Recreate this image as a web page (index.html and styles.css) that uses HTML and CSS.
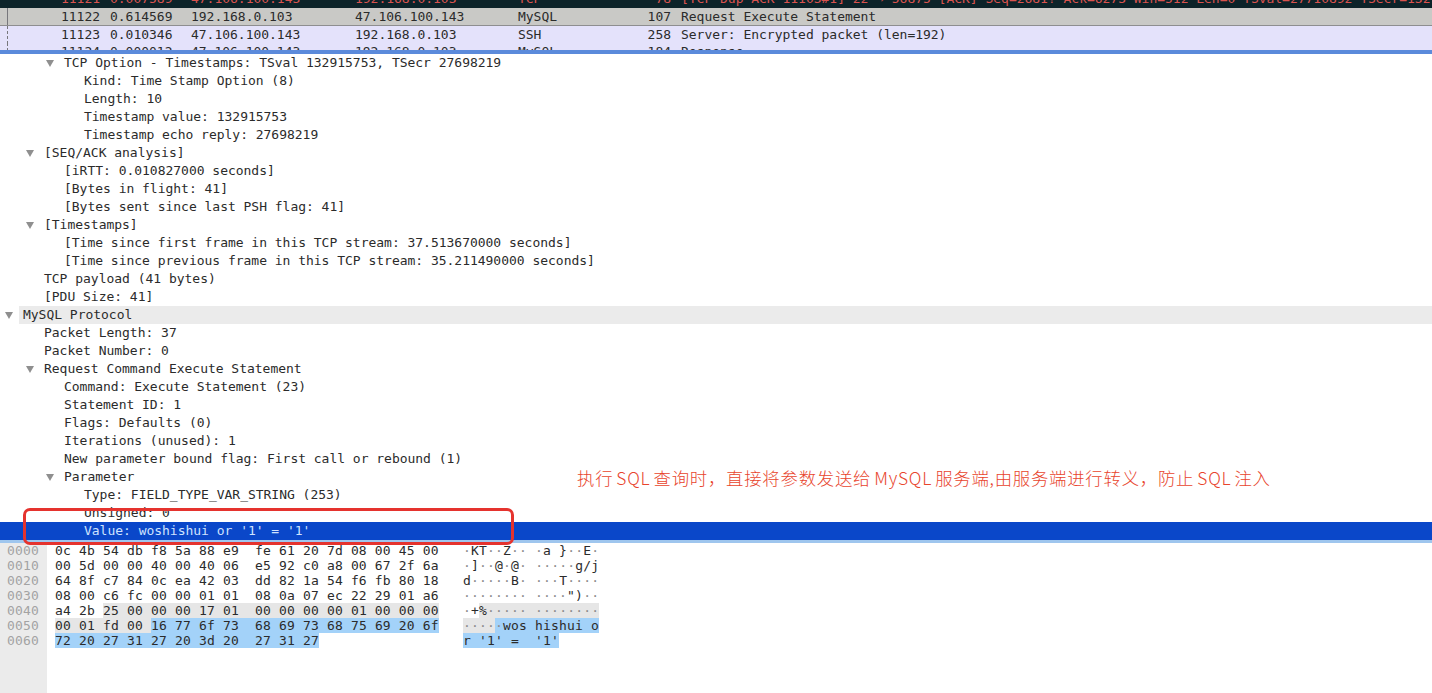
FILE: index.html
```html
<!DOCTYPE html>
<html lang="zh">
<head>
<meta charset="utf-8">
<title>Wireshark</title>
<link rel="stylesheet" href="styles.css">
</head>
<body>
<main class="app">
  <section class="packets">
    <div class="pkt pkt-dark"><span class="mark"></span><span class="no">11121</span><span class="time">0.007589</span><span class="src">47.106.100.143</span><span class="dst">192.168.0.103</span><span class="proto">TCP</span><span class="len">78</span><span class="info">[TCP Dup ACK 11103#1] 22 → 56875 [ACK] Seq=2681? Ack=6273 Win=512 Len=0 TSval=27710892 TSecr=132</span></div>
    <div class="pkt pkt-gray"><span class="mark mark-solid"></span><span class="no">11122</span><span class="time">0.614569</span><span class="src">192.168.0.103</span><span class="dst">47.106.100.143</span><span class="proto">MySQL</span><span class="len">107</span><span class="info">Request Execute Statement</span></div>
    <div class="pkt pkt-lav"><span class="mark mark-dash"></span><span class="no">11123</span><span class="time">0.010346</span><span class="src">47.106.100.143</span><span class="dst">192.168.0.103</span><span class="proto">SSH</span><span class="len">258</span><span class="info">Server: Encrypted packet (len=192)</span></div>
    <div class="pkt pkt-cut"><span class="mark mark-dash"></span><span class="no">11124</span><span class="time">0.000012</span><span class="src">47.106.100.143</span><span class="dst">192.168.0.103</span><span class="proto">MySQL</span><span class="len">184</span><span class="info">Response</span></div>
  </section>

  <section class="details">
    <div class="row l2"><i class="tri"></i>TCP Option - Timestamps: TSval 132915753, TSecr 27698219</div>
    <div class="row l3">Kind: Time Stamp Option (8)</div>
    <div class="row l3">Length: 10</div>
    <div class="row l3">Timestamp value: 132915753</div>
    <div class="row l3">Timestamp echo reply: 27698219</div>
    <div class="row l1"><i class="tri"></i>[SEQ/ACK analysis]</div>
    <div class="row l2">[iRTT: 0.010827000 seconds]</div>
    <div class="row l2">[Bytes in flight: 41]</div>
    <div class="row l2">[Bytes sent since last PSH flag: 41]</div>
    <div class="row l1"><i class="tri"></i>[Timestamps]</div>
    <div class="row l2">[Time since first frame in this TCP stream: 37.513670000 seconds]</div>
    <div class="row l2">[Time since previous frame in this TCP stream: 35.211490000 seconds]</div>
    <div class="row l1">TCP payload (41 bytes)</div>
    <div class="row l1">[PDU Size: 41]</div>
    <div class="row l0"><i class="tri"></i><span class="head">MySQL Protocol</span></div>
    <div class="row l1">Packet Length: 37</div>
    <div class="row l1">Packet Number: 0</div>
    <div class="row l1"><i class="tri"></i>Request Command Execute Statement</div>
    <div class="row l2">Command: Execute Statement (23)</div>
    <div class="row l2">Statement ID: 1</div>
    <div class="row l2">Flags: Defaults (0)</div>
    <div class="row l2">Iterations (unused): 1</div>
    <div class="row l2">New parameter bound flag: First call or rebound (1)</div>
    <div class="row l2"><i class="tri"></i>Parameter</div>
    <div class="row l3">Type: FIELD_TYPE_VAR_STRING (253)</div>
    <div class="row l3">Unsigned: 0</div>
    <div class="row l3 selected">Value: woshishui or '1' = '1'</div>
  </section>

  <section class="bytes">
    <div class="offsets">
      <div>0000</div><div>0010</div><div>0020</div><div>0030</div><div>0040</div><div>0050</div><div>0060</div>
    </div>
    <div class="hex">
      <div>0c 4b 54 db f8 5a 88 e9  fe 61 20 7d 08 00 45 00</div>
      <div>00 5d 00 00 40 00 40 06  e5 92 c0 a8 00 67 2f 6a</div>
      <div>64 8f c7 84 0c ea 42 03  dd 82 1a 54 f6 fb 80 18</div>
      <div>08 00 c6 fc 00 00 01 01  08 0a 07 ec 22 29 01 a6</div>
      <div>a4 2b <span class="hl-gray">25 00 00 00 17 01  00 00 00 00 01 00 00 00</span></div>
      <div><span class="hl-gray">00 01 fd 00 </span><span class="hl-blue">16 77 6f 73  68 69 73 68 75 69 20 6f</span></div>
      <div><span class="hl-blue">72 20 27 31 27 20 3d 20  27 31 27</span></div>
    </div>
    <div class="ascii">
      <div><b>·</b>KT<b>··</b>Z<b>··</b> <b>·</b>a }<b>··</b>E<b>·</b></div>
      <div><b>·</b>]<b>··</b>@<b>·</b>@<b>·</b> <b>·····</b>g/j</div>
      <div>d<b>·····</b>B<b>·</b> <b>···</b>T<b>····</b></div>
      <div><b>········</b> <b>····</b>")<b>··</b></div>
      <div><b>·</b>+<span class="hl-gray">%<b>·····</b> <b>········</b></span></div>
      <div><span class="hl-gray"><b>····</b></span><span class="hl-blue"><b>·</b>wos hishui o</span></div>
      <div><span class="hl-blue">r '1' =  '1'</span></div>
    </div>
  </section>

  <div class="callout"></div>
  <p class="note">执行 SQL 查询时，直接将参数发送给 MySQL 服务端,由服务端进行转义，防止 SQL 注入</p>
</main>
</body>
</html>
```
FILE: styles.css
```css
* { box-sizing: border-box; }
html, body { margin: 0; padding: 0; height: 100%; overflow: hidden; background: #fff; }

.app {
  position: relative;
  width: 1432px;
  height: 693px;
  display: flex;
  flex-direction: column;
  overflow: hidden;
  font-family: "DejaVu Sans Mono", monospace;
  font-size: 13px;
  letter-spacing: -0.02px;
  color: #2b2b2b;
}

/* packet list */
.packets {
  height: 54px;
  flex: none;
  overflow: hidden;
  background: #e4e2fb;
  border-bottom: 4px solid #5b8adb;
}
.pkt {
  display: flex;
  white-space: pre;
  line-height: 18px;
  overflow: hidden;
}
.pkt-dark { height: 8px; align-items: flex-end; background: #0c2329; color: #d9534f; }
.pkt-gray { height: 18px; background: #c9c9c6; border-bottom: 1px solid #8e8e90; align-items: center; }
.pkt-lav { height: 17px; background: #e4e2fb; align-items: center; }
.pkt-cut { height: 7px; background: #e4e2fb; align-items: flex-start; }
.pkt span { flex: none; height: 18px; }
.mark { width: 61px; }
.mark-solid::before, .mark-dash::before {
  content: "";
  display: block;
  width: 0;
  height: 100%;
  margin-left: 7px;
  border-left: 1px solid #77777c;
}
.mark-dash::before { border-left-style: dashed; }
.no { width: 49px; }
.time { width: 81px; }
.src { width: 164px; }
.dst { width: 163px; }
.proto { width: 106px; }
.len { width: 47px; text-align: right; margin-right: 10px; }
.info { flex: 1; }

/* protocol tree */
.details {
  height: 486px;
  flex: none;
  background: #fff;
}
.row {
  height: 18px;
  line-height: 18px;
  white-space: pre;
  display: flex;
  align-items: center;
}
.l0 { padding-left: 23px; }
.l1 { padding-left: 44px; }
.l2 { padding-left: 64px; }
.l3 { padding-left: 84px; }
.tri {
  flex: none;
  width: 0;
  height: 0;
  margin-left: -18px;
  margin-right: 10px;
  border-left: 4px solid transparent;
  border-right: 4px solid transparent;
  border-top: 7px solid #8f8f8f;
}
.l0 .head {
  flex: 1;
  margin-left: -4px;
  padding-left: 4px;
  height: 18px;
  background: #ebebeb;
}
.selected { background: #0a47c9; color: #cfe3ff; }

/* byte view */
.bytes {
  flex: 1;
  display: flex;
  border-top: 3px solid #9fc6ee;
  line-height: 15px;
  letter-spacing: 0.17px;
}
.offsets {
  width: 47px;
  flex: none;
  padding-left: 7px;
  background: #ebebeb;
  color: #a3a3a3;
  letter-spacing: 0.2px;
}
.hex { width: 408px; flex: none; padding-left: 8px; }
.ascii { flex: 1; padding-left: 8px; letter-spacing: 0.18px; }
.ascii b { font-weight: 400; color: #8c8c8c; }
.hex div, .ascii div, .offsets div { height: 15px; white-space: pre; }
.hl-gray, .hl-blue { display: inline-block; height: 15px; vertical-align: top; }
.hl-gray { background: #e6e6e6; }
.hl-blue { background: #a3d2f9; }

/* annotation overlays */
.callout {
  position: absolute;
  left: 23px;
  top: 508px;
  width: 491px;
  height: 37px;
  border: 3px solid #e5332e;
  border-radius: 7px;
}
.note {
  position: absolute;
  left: 577px;
  top: 466px;
  margin: 0;
  white-space: pre;
  font-family: "Noto Sans CJK SC", sans-serif;
  font-size: 17.4px;
  font-weight: 300;
  line-height: 24px;
  color: #e8442c;
  letter-spacing: 0.75px;
  word-spacing: -1.5px;
}
```
